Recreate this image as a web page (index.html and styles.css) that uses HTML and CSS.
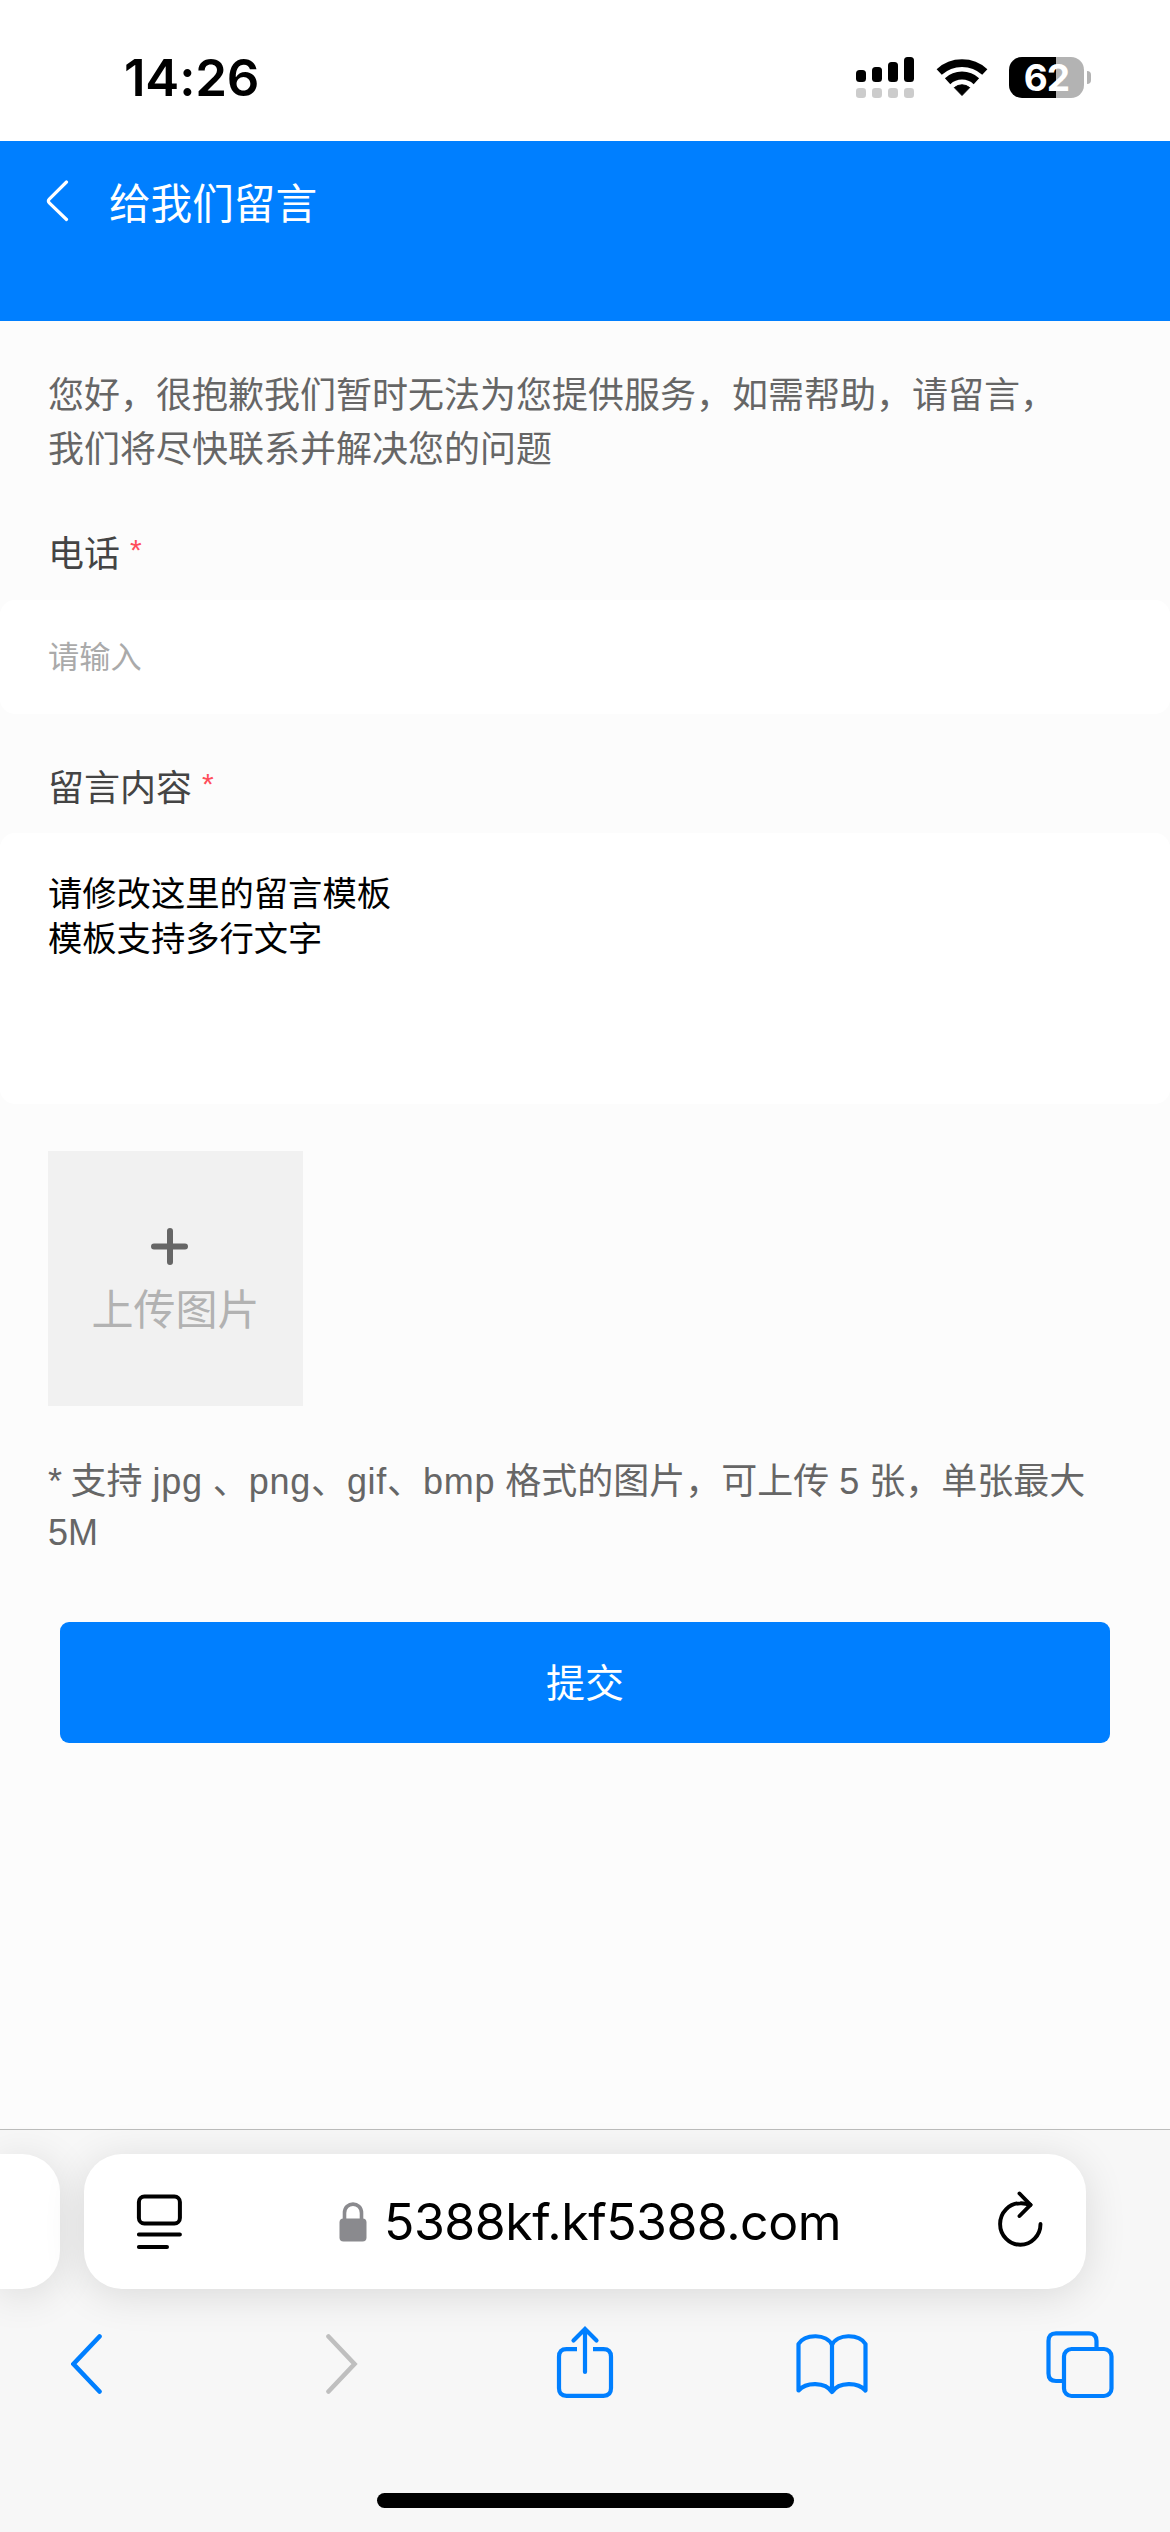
FILE: index.html
```html
<!DOCTYPE html>
<html lang="zh-CN">
<head>
<meta charset="utf-8">
<title>给我们留言</title>
<link rel="stylesheet" href="styles.css">
</head>
<body>
<div class="status-bar">
  <div class="clock">14:26</div>
  <div class="status-icons">
    <svg class="signal" width="58" height="41" viewBox="0 0 58 41">
      <rect x="0" y="13" width="10" height="12" rx="3.5"/>
      <rect x="16" y="10" width="10" height="15" rx="3.5"/>
      <rect x="32" y="5" width="10" height="20" rx="3.5"/>
      <rect x="48" y="0" width="10" height="25" rx="3.5"/>
      <g fill="#ccc">
        <rect x="0" y="31" width="10" height="10" rx="3.2"/>
        <rect x="16" y="31" width="10" height="10" rx="3.2"/>
        <rect x="32" y="31" width="10" height="10" rx="3.2"/>
        <rect x="48" y="31" width="10" height="10" rx="3.2"/>
      </g>
    </svg>
    <svg class="wifi" width="52" height="41" viewBox="0 0 52 41">
      <path d="M3.2 15A33.7 33.7 0 0 1 48.8 15" fill="none" stroke="#000" stroke-width="7.6"/>
      <path d="M11.6 24.2A21.3 21.3 0 0 1 40.4 24.2" fill="none" stroke="#000" stroke-width="8"/>
      <path d="M26 38.5L18.3 30.6A12 12 0 0 1 33.7 30.6Z" stroke="#000" stroke-width="1" stroke-linejoin="round"/>
    </svg>
    <div class="battery"><div class="battery-body">62</div><div class="battery-cap"></div></div>
  </div>
</div>

<header class="header">
  <svg width="24" height="42" viewBox="0 0 24 42"><path d="M20.5 2L3.3 19Q1.5 21 3.3 23L20.5 39.5" fill="none" stroke="#fff" stroke-width="3.2" stroke-linecap="round"/></svg>
  <h1 class="title">给我们留言</h1>
</header>

<main class="page">
  <p class="intro">您好，很抱歉我们暂时无法为您提供服务，如需帮助，请留言，<br>我们将尽快联系并解决您的问题</p>
  <div class="label">电话 <span class="required">*</span></div>
  <div class="field">请输入</div>
  <div class="label label-message">留言内容 <span class="required">*</span></div>
  <div class="field-message">请修改这里的留言模板<br>模板支持多行文字</div>
  <div class="upload">
    <svg width="37" height="37" viewBox="0 0 37 37"><path d="M3 18.5H34M19 3V34" stroke="#666" stroke-width="6" stroke-linecap="round"/></svg>
    <span class="upload-text">上传图片</span>
  </div>
  <p class="note"><span class="bullet">*</span> 支持 <span class="latin">jpg</span> 、<span class="latin">png</span>、<span class="latin">gif</span>、<span class="latin">bmp</span> 格式的图片，可上传 5 张，单张最大<br>5M</p>
  <div class="submit">提交</div>
</main>

<footer class="browser">
  <div class="address-row">
    <div class="prev-tab"></div>
    <div class="address">
      <svg width="46" height="55" viewBox="0 0 46 55"><g fill="none" stroke="#000" stroke-width="4" stroke-linecap="round"><rect x="2.9" y="2.5" width="41" height="27" rx="5.5"/><path d="M2.9 40.5H43.9M2.9 53H31"/></g></svg>
      <div class="url">
        <svg width="28" height="40" viewBox="0 0 28 40"><rect x="0.5" y="16.5" width="27" height="23" rx="4" fill="#8a8a8e"/><path d="M5.5 18V11C5.5 -.8 22.5 -.8 22.5 11V18" fill="none" stroke="#8a8a8e" stroke-width="3.6"/></svg>
        <span class="domain">5388kf.kf5388.com</span>
      </div>
      <svg width="46" height="56" viewBox="0 0 46 56"><g fill="none" stroke="#000" stroke-width="3.9" stroke-linecap="round" stroke-linejoin="round"><path d="M42.5 33A20.2 20.8 0 1 1 22.3 12.2Q27 12 32.5 13.8"/><path d="M21.5 2.5L32.5 13.8L21.5 25"/></g></svg>
    </div>
  </div>
  <nav class="toolbar">
    <svg class="tool-back" width="32" height="76" viewBox="0 0 32 76"><path d="M28.5 10.5L2.5 38L28.5 65.5" fill="none" stroke="#007fff" stroke-width="4.6" stroke-linecap="round"/></svg>
    <svg class="tool-forward" width="32" height="76" viewBox="0 0 32 76"><path d="M2.5 10.5L28.5 38L2.5 65.5" fill="none" stroke="#bfbfbf" stroke-width="4.6" stroke-linecap="round"/></svg>
    <svg class="tool-share" width="58" height="76" viewBox="0 0 58 76"><g fill="none" stroke="#007fff" stroke-width="4.2" stroke-linecap="round"><path d="M21 23.2H10.5Q3 23.2 3 30.7V62.3Q3 69.8 10.5 69.8H47.5Q55 69.8 55 62.3V30.7Q55 23.2 47.5 23.2H37" stroke-linecap="butt"/><path d="M29 46V3.5M17.5 14.5L29 3L40.5 14.5"/></g></svg>
    <svg class="tool-book" width="72" height="76" viewBox="0 0 72 76"><path d="M36 19C31 7.5 9 7.5 2.5 18V64.5C10 56 29 55.5 36 66C43 55.5 62 56 69.5 64.5V18C63 7.5 41 7.5 36 19ZM36 19V66" fill="none" stroke="#007fff" stroke-width="4.2" stroke-linecap="round" stroke-linejoin="round"/></svg>
    <svg class="tool-tabs" width="68" height="76" viewBox="0 0 68 76"><g fill="none" stroke="#007fff" stroke-width="4.2"><path d="M50.5 22V15Q50.5 7.3 43 7.3H10Q2.5 7.3 2.5 15V47.5Q2.5 55 10 55H18"/><rect x="18" y="23" width="47.5" height="47" rx="7.5"/></g></svg>
  </nav>
  <div class="home-indicator"></div>
</footer>
</body>
</html>
```
FILE: styles.css
```css
* { box-sizing: border-box; }
body {
  margin: 0;
  width: 1170px;
  height: 2532px;
  display: flex;
  flex-direction: column;
  overflow: hidden;
  background: #fcfcfc;
  font-family: "Liberation Sans", "Noto Sans CJK SC", sans-serif;
}
svg { display: block; flex: none; }
h1, p { margin: 0; font-weight: 400; }

.status-bar {
  height: 141px;
  flex: none;
  display: flex;
  justify-content: space-between;
  padding: 0 79px 0 124px;
  background: #fff;
}
.clock {
  font: 600 51px/60px Inter, sans-serif;
  letter-spacing: -0.2px;
  padding-top: 48px;
}
.status-icons { display: flex; align-items: flex-start; padding-top: 57px; }
.wifi { margin-left: 22px; }
.battery { display: flex; align-items: center; margin-left: 21px; gap: 3px; }
.battery-body {
  width: 75px;
  height: 41px;
  border-radius: 13px;
  background: linear-gradient(90deg, #000 47px, #b3b3b3 47px);
  color: #fff;
  font: 700 37px/41px Inter, sans-serif;
  letter-spacing: -0.8px;
  text-align: center;
}
.battery-cap { width: 4px; height: 13px; border-radius: 0 5px 5px 0; background: #b3b3b3; }

.header {
  height: 179.5px;
  flex: none;
  display: flex;
  align-items: flex-start;
  gap: 39px;
  padding: 39px 0 0 46px;
  background: #007fff;
  color: #fff;
}
.title { font-size: 41.6px; line-height: 60px; margin-top: -5px; }

.page { flex: 1; }
.intro { padding: 48px 48px 0; font-size: 36px; line-height: 54px; color: #666; }
.label { padding: 0 48px; margin-top: 48px; height: 60px; font-size: 36px; line-height: 60px; color: #444; }
.required { font-size: 30px; color: #ff4d5b; vertical-align: 7px; line-height: 1; }
.field {
  height: 114px;
  margin-top: 15px;
  padding: 0 48px;
  border-radius: 15px;
  background: #fff;
  font-size: 31.2px;
  line-height: 116px;
  color: #aaa;
}
.label-message { margin-top: 45px; }
.field-message {
  height: 271px;
  margin-top: 14.5px;
  padding: 39px 48px 0;
  border-radius: 15px;
  background: #fff;
  font-size: 34.3px;
  line-height: 45px;
  color: #000;
}
.upload {
  width: 255px;
  height: 255px;
  margin: 47px 0 0 48px;
  padding-top: 77px;
  background: #f1f1f1;
  display: flex;
  flex-direction: column;
  align-items: center;
}
.upload svg { margin-right: 13px; }
.upload-text { font-size: 42px; line-height: 60px; margin-top: 16px; color: #b2b2b2; }
.note { margin: 50px 48px 0; font-size: 36px; line-height: 51px; color: #666; white-space: nowrap; }
.bullet { letter-spacing: -1.5px; }
.latin { letter-spacing: 0.7px; }
.submit {
  height: 120.5px;
  margin: 64px 60px 0;
  padding-top: 2px;
  border-radius: 9px;
  background: #007fff;
  color: #fff;
  font-size: 39px;
  line-height: 120px;
  text-align: center;
}

.browser { height: 403px; flex: none; border-top: 1px solid #bcbdbc; background: #f7f7f7; }
.address-row { display: flex; gap: 24px; padding-top: 24px; }
.prev-tab, .address { height: 135px; background: #fff; box-shadow: 0 6px 42px rgba(0, 0, 0, 0.12); }
.prev-tab { width: 60px; border-radius: 0 38px 38px 0; }
.address {
  width: 1002px;
  border-radius: 38px;
  display: flex;
  align-items: center;
  justify-content: space-between;
  padding: 0 42px 0 52px;
}
.address > svg:last-child { margin-top: -5px; }
.url { display: flex; align-items: center; gap: 17px; }
.domain { font: 400 50px/60px Inter, sans-serif; letter-spacing: -0.5px; }
.toolbar { display: flex; padding-left: 71px; margin-top: 37px; }
.tool-forward { margin-left: 223px; }
.tool-share { margin-left: 198px; }
.tool-book { margin-left: 182px; }
.tool-tabs { margin-left: 178px; }
.home-indicator { width: 417px; height: 15px; margin: 91px auto 0; border-radius: 8px; background: #000; }
```
